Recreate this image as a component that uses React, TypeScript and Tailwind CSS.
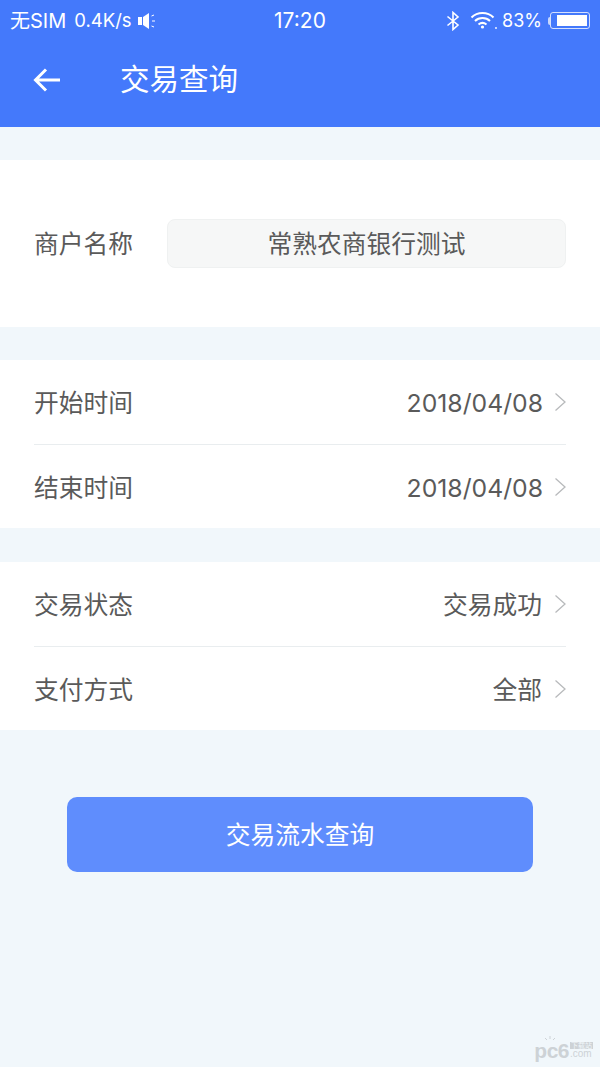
import React from 'react';

const cjk = 'font-["Liberation_Sans","Noto_Sans_CJK_SC",sans-serif]';
const latin = 'font-["Inter","Noto_Sans_CJK_SC",sans-serif]';

function Chevron({ tight }: { tight?: boolean }) {
  return (
    <svg width="13" height="20" viewBox="0 0 13 20" fill="none" className={`shrink-0 ${tight ? 'ml-[11px]' : 'ml-[12px]'}`}>
      <path d="M1.5 1.5 L11 10 L1.5 18.5" stroke="#b8babc" strokeWidth="1.3" />
    </svg>
  );
}

function Row({ label, value, divider, numeric }: { label: string; value: string; divider?: boolean; numeric?: boolean }) {
  return (
    <div className={`mx-[34px] flex items-center justify-between ${divider ? 'h-[85px] border-b border-[#e9edef]' : 'h-[83px] pt-[1px]'}`}>
      <span className="text-[24.75px] text-[#5a5a5a] pt-[4px]">{label}</span>
      <span className="flex items-center mr-[-1px]">
        <span className={`text-[24.75px] text-[#5a5a5a] pt-[3px] ${numeric ? latin : ''}`}>{value}</span>
        <Chevron tight={numeric} />
      </span>
    </div>
  );
}

function StatusBar() {
  return (
    <div className="h-[41px] px-[10px] flex items-center justify-between text-white">
      <div className="flex items-center w-[190px]">
        <span className={`text-[20px] ${latin}`}>无SIM</span>
        <span className={`text-[18.5px] ml-[8px] ${latin}`}>0.4K/s</span>
        <svg width="22" height="18" viewBox="0 0 22 18" fill="white" className="ml-[5px]">
          <rect x="1" y="5" width="4" height="8" />
          <path d="M6 5 L12 1 V17 L6 13 Z" />
          <path d="M14.5 4 L17 3 M15 9 H18 M14.5 14 L17 15" stroke="white" strokeWidth="1" />
        </svg>
      </div>
      <span className={`text-[21px] ${latin}`}>17:20</span>
      <div className="flex items-center justify-end w-[190px]">
        <svg width="14" height="20" viewBox="0 0 14 20" fill="none" stroke="white" strokeWidth="1.6">
          <path d="M1.5 5.5 L12 14 L7 18.5 V1.5 L12 6 L1.5 14.5" />
        </svg>
        <svg width="28" height="20" viewBox="0 0 28 20" fill="none" stroke="white" strokeWidth="2" className="ml-[10px] mt-[-2px]">
          <path d="M1.5 7.5 C7.5 1.5 17.5 1.5 23.5 7.5" />
          <path d="M5 11 C9 7 16 7 20 11" />
          <path d="M8.5 14.5 C11 12.5 14 12.5 16.5 14.5" />
          <circle cx="12.5" cy="17" r="1.6" fill="white" stroke="none" />
          <circle cx="26" cy="18" r="0.9" fill="white" stroke="none" />
        </svg>
        <span className={`text-[18px] ml-[4px] ${latin}`}>83%</span>
        <div className="ml-[6px] w-[2px] h-[8px] bg-[#c8d7fc] rounded-l-sm" />
        <div className="w-[40px] h-[17px] border border-[#d5e0fd] rounded-[3px] p-[2px] flex justify-end">
          <div className="w-[30px] bg-white" />
        </div>
      </div>
    </div>
  );
}

export default function App() {
  return (
    <div className={`relative w-[600px] h-[1067px] overflow-hidden bg-[#f1f7fb] ${cjk}`}>
      {/* Header */}
      <div className="h-[127px] bg-[#4479fb]">
        <StatusBar />
        <div className="h-[78px] flex items-center pl-[33px]">
          <svg width="28" height="26" viewBox="0 0 28 26" fill="none" stroke="white" strokeWidth="3">
            <path d="M27 13 H3 M13 2.5 L2.5 13 L13 23.5" />
          </svg>
          <span className="ml-[59px] text-[29.5px] text-white pt-[1px]">交易查询</span>
        </div>
      </div>

      {/* Merchant */}
      <div className="mt-[33px] h-[167px] bg-white px-[34px] flex items-center">
        <span className="text-[24.75px] text-[#5a5a5a] w-[133px] pt-[3px]">商户名称</span>
        <div className="w-[399px] h-[49px] mb-[1px] pt-[3px] rounded-[8px] border border-[#eff1f1] bg-[#f6f7f7] flex items-center justify-center text-[24.75px] text-[#5a5a5a]">
          常熟农商银行测试
        </div>
      </div>

      {/* Dates */}
      <div className="mt-[33px] bg-white">
        <Row label="开始时间" value="2018/04/08" divider numeric />
        <Row label="结束时间" value="2018/04/08" numeric />
      </div>

      {/* Filters */}
      <div className="mt-[34px] bg-white">
        <Row label="交易状态" value="交易成功" divider />
        <Row label="支付方式" value="全部" />
      </div>

      {/* Submit */}
      <div className="mt-[67px] mx-[67px] h-[75px] pt-[3px] rounded-[10px] bg-[#5f8dfd] flex items-center justify-center text-[24.75px] text-white">
        交易流水查询
      </div>

      {/* Watermark */}
      <div className="absolute right-[7px] bottom-[6px] flex items-end text-[#cdd2d6] leading-none">
        <span className="relative text-[21px] font-bold tracking-[-0.5px]">
          pc6
          <svg width="12" height="7" viewBox="0 0 12 7" fill="none" stroke="#cdd2d6" strokeWidth="1" className="absolute left-[10px] top-[-4px]">
            <path d="M6 0 V3 M1 2 L3 4 M11 2 L9 4" />
          </svg>
        </span>
        <span className="flex flex-col items-start ml-[1px] mb-[2px]">
          <span className="text-[7px] bg-[#cdd2d6] text-[#f1f7fb] px-[1px]">下载站</span>
          <span className="text-[10px]">.com</span>
        </span>
      </div>
    </div>
  );
}
